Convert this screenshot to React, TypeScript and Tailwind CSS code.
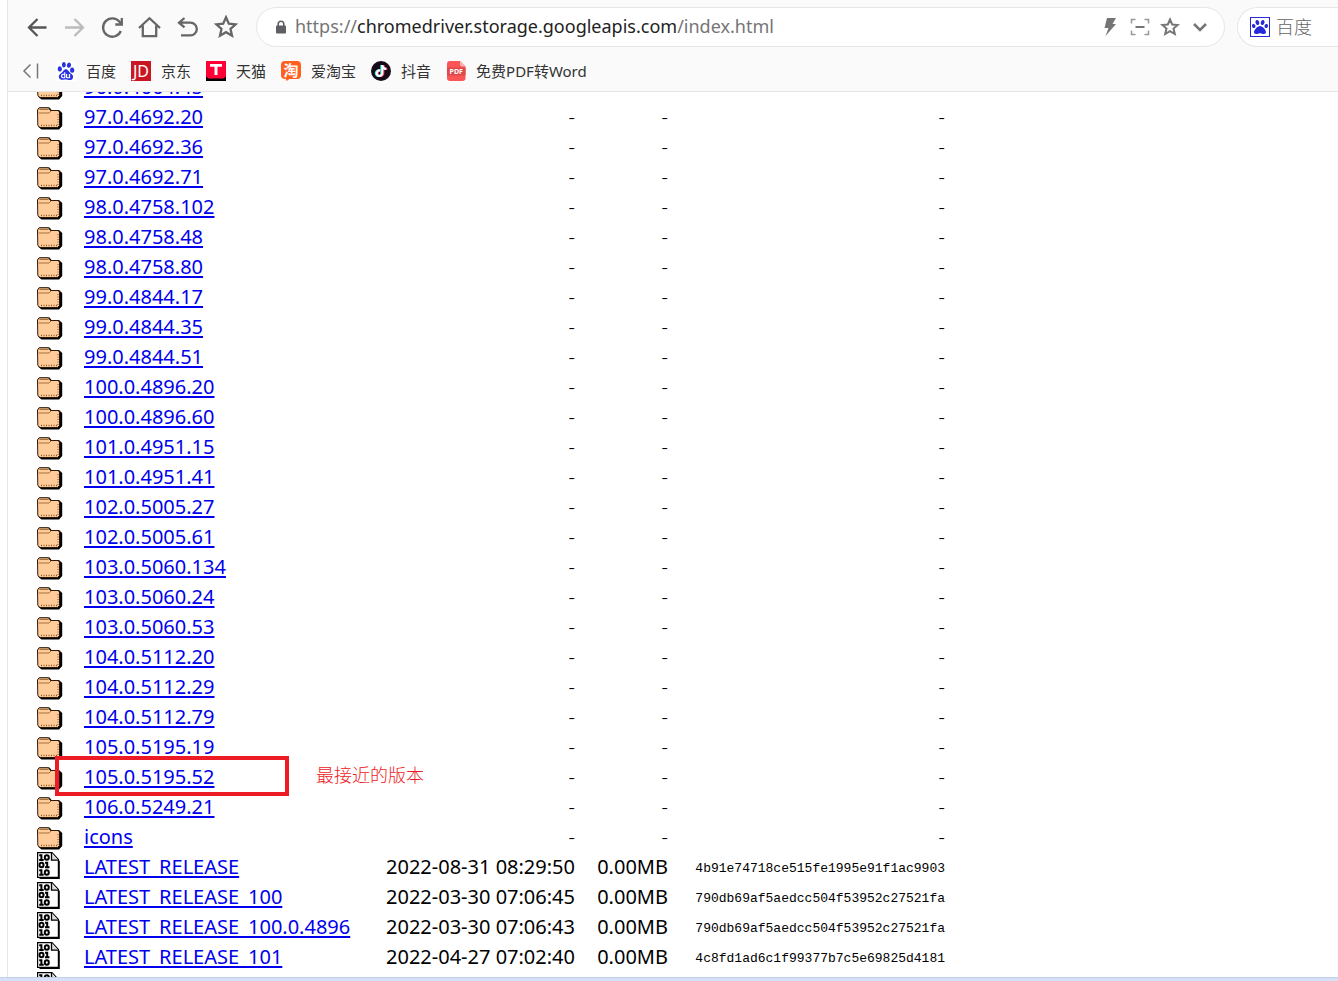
import type { ReactNode } from "react";
import { FaPaw } from "react-icons/fa";
import { FaTiktok } from "react-icons/fa6";
import { SiBaidu } from "react-icons/si";

type Entry = { name: string; date?: string; size?: string; etag?: string; note?: string };

const folders: Entry[] = [
  "96.0.4664.45", "97.0.4692.20", "97.0.4692.36", "97.0.4692.71", "98.0.4758.102", "98.0.4758.48",
  "98.0.4758.80", "99.0.4844.17", "99.0.4844.35", "99.0.4844.51", "100.0.4896.20", "100.0.4896.60",
  "101.0.4951.15", "101.0.4951.41", "102.0.5005.27", "102.0.5005.61", "103.0.5060.134", "103.0.5060.24",
  "103.0.5060.53", "104.0.5112.20", "104.0.5112.29", "104.0.5112.79", "105.0.5195.19", "105.0.5195.52",
  "106.0.5249.21", "icons",
].map((name) => (name === "105.0.5195.52" ? { name, note: "最接近的版本" } : { name }));

const files: Entry[] = [
  { name: "LATEST_RELEASE", date: "2022-08-31 08:29:50", size: "0.00MB", etag: "4b91e74718ce515fe1995e91f1ac9903" },
  { name: "LATEST_RELEASE_100", date: "2022-03-30 07:06:45", size: "0.00MB", etag: "790db69af5aedcc504f53952c27521fa" },
  { name: "LATEST_RELEASE_100.0.4896", date: "2022-03-30 07:06:43", size: "0.00MB", etag: "790db69af5aedcc504f53952c27521fa" },
  { name: "LATEST_RELEASE_101", date: "2022-04-27 07:02:40", size: "0.00MB", etag: "4c8fd1ad6c1f99377b7c5e69825d4181" },
  { name: "LATEST_RELEASE_101.0.4951", date: "2022-04-27 07:02:37", size: "0.00MB", etag: "4c8fd1ad6c1f99377b7c5e69825d4181" },
];

function FolderIcon() {
  return (
    <svg viewBox="0 0 26 23" className="mt-[5px] block h-[23px] w-[26px]" aria-hidden="true">
      <path d="M1 3 3 .5h9.500l2 2.500H22l3.200 3V19l-3.200 3.500H4.500L1.500 20z" fill="#000" />
      <path d="M.5 3 2 .8h9.500L13.500 3.500H21L22.500 5v13.500L20.500 20.500H3L.8 18.500z" fill="#ffcc99" stroke="#2a170a" strokeWidth="1" />
      <path d="M1.500 6h10.500L14 4M2.500 2.500h9" fill="none" stroke="#a8703c" strokeWidth="1" />
      <path d="M4 18.500h17" stroke="#8a5a2c" strokeWidth="1.400" strokeDasharray="1 1.500" />
      <path d="M21 7v12" stroke="#a8703c" strokeWidth="1.400" strokeDasharray="1 1.500" />
    </svg>
  );
}

function BinaryIcon() {
  return (
    <svg viewBox="0 0 23 27" className="block h-[27px] w-[23px]" aria-hidden="true">
      <path d="M2.500 2H15l7.800 7v18H2.500z" fill="#000" />
      <path d="M.6.6h14.400l6.400 7v17.800H.6z" fill="#fff" stroke="#000" strokeWidth="1.200" />
      <path d="M14.500.8v7.400h7" fill="#ddd" stroke="#000" strokeWidth="1.300" />
      <g fill="none" stroke="#000" strokeWidth="2">
        <path d="M2.200 3.300h2.200v5M2.200 8h4.500" />
        <ellipse cx="9.800" cy="5.500" rx="2" ry="2.200" />
        <ellipse cx="4.500" cy="13" rx="2" ry="2.200" />
        <path d="M8 10.800h2.200v5M8 15.200h4.500" />
        <path d="M2.200 18.300h2.200v5M2.200 22.700h4.500" />
        <ellipse cx="9.800" cy="20.500" rx="2" ry="2.200" />
      </g>
    </svg>
  );
}

const starPath = "M12 2.300l2.800 6.300 6.900.7-5.200 4.600 1.500 6.800-6-3.500-6 3.500 1.500-6.800L2.300 9.300l6.900-.7z";

function NavButton({ label, color, children }: { label: string; color: string; children: ReactNode }) {
  return (
    <button type="button" aria-label={label} className={`size-6 shrink-0 ${color}`}>
      <svg viewBox="0 0 24 24" className="size-6" fill="none" stroke="currentColor" strokeWidth="2.300">
        {children}
      </svg>
    </button>
  );
}

function BarButton({ label, children }: { label: string; children: ReactNode }) {
  return (
    <button type="button" aria-label={label} className="size-5 shrink-0 text-[#757575]">
      <svg viewBox="0 0 20 20" className="size-5" fill="none" stroke="currentColor" strokeWidth="2">
        {children}
      </svg>
    </button>
  );
}

function Bookmark({ label, icon }: { label: string; icon: ReactNode }) {
  return (
    <a href="#" className="flex items-center gap-2.5 whitespace-nowrap">
      {icon}
      <span>{label}</span>
    </a>
  );
}

function Dash() {
  return <span className="font-light">-</span>;
}

function Row({ entry, icon }: { entry: Entry; icon: ReactNode }) {
  return (
    <tr className="h-[30px]">
      <td className="pl-[29px] align-top">{icon}</td>
      <td className="relative">
        <a
          href="#"
          className="text-[#0000ee] underline decoration-2 underline-offset-2 [text-decoration-skip-ink:none]"
        >
          {entry.name}
        </a>
        {entry.note && (
          <>
            <div className="absolute -top-1.5 -left-[29px] h-10 w-[234px] border-4 border-[#ed1c24]" />
            <span className="absolute top-0 left-[232px] text-lg leading-[26px] font-light whitespace-nowrap text-[#ed1c24]">
              {entry.note}
            </span>
          </>
        )}
      </td>
      <td className="text-right">{entry.date ?? <Dash />}</td>
      <td className="text-right">{entry.size ?? <Dash />}</td>
      <td className="text-right">
        {entry.etag ? (
          <span className="inline-block align-middle font-['Liberation_Mono',monospace] text-[13px] leading-4">
            {entry.etag}
          </span>
        ) : (
          <Dash />
        )}
      </td>
    </tr>
  );
}

export default function App() {
  return (
    <div className="flex h-screen flex-col overflow-hidden bg-white font-['Noto_Sans','Noto_Sans_CJK_SC',sans-serif]">
      <div className="ml-[7px] flex min-h-0 flex-1 flex-col border-l border-[#e6e6e6]">
        <header className="relative shrink-0 border-b border-[#e6e6e6] bg-[#fafafa]">
          <div className="flex h-[54px] items-center pl-4">
            <nav className="flex gap-3.5 text-[#5a5a5a]" aria-label="导航">
              <NavButton label="后退" color="text-[#555555]">
                <path d="M5 12.500h17.500M13.500 4 5 12.500l8.500 8.500" />
              </NavButton>
              <NavButton label="前进" color="text-[#bcbcbc]">
                <path d="M3 12.500h17.500M12.500 4l8.500 8.500-8.500 8.500" />
              </NavButton>
              <NavButton label="刷新" color="text-[#666666]">
                <path d="M20.800 16A9.200 9.200 0 1 1 19.500 6.800l2 2.200M21.800 3v6.500h-6.500" />
              </NavButton>
              <NavButton label="主页" color="text-[#666666]">
                <path d="M1 13 11.500 3.200 22 13M4.800 10.500v10.700h13.400v-10.700" />
              </NavButton>
              <NavButton label="恢复" color="text-[#666666]">
                <path d="M8.500 3 3 7.700l5.500 4.600M3.500 7.700h11a6.300 6.300 0 0 1 0 12.600H5" />
              </NavButton>
              <NavButton label="收藏" color="text-[#666666]">
                <path d={starPath} />
              </NavButton>
            </nav>
            <div className="ml-[18px] flex h-10 min-w-0 flex-1 items-center rounded-full border border-[#e6e6e6] bg-white pr-3.5 pl-[18px]">
              <svg viewBox="0 0 12 14" className="h-3.5 w-3 shrink-0" aria-hidden="true">
                <path d="M3.200 6V4a2.800 2.800 0 0 1 5.600 0v2" fill="none" stroke="#5f6368" strokeWidth="1.600" />
                <rect x="1" y="5.500" width="10" height="8" rx="1" fill="#5f5f63" />
              </svg>
              <div className="ml-2 min-w-0 flex-1 truncate pb-0.5 text-lg leading-7 text-[#757575]">
                https://<span className="text-[#222222]">chromedriver.storage.googleapis.com</span>/index.html
              </div>
              <div className="flex gap-2.5">
                <BarButton label="极速模式">
                  <path d="M7 1h9L12.500 7H16L5.500 19 8.500 11H4.500z" fill="currentColor" stroke="none" />
                </BarButton>
                <BarButton label="截图">
                  <path d="M1.500 6.500v-4h4M14.500 2.500h4v4M18.500 13.500v4h-4M5.500 17.500h-4v-4" strokeWidth="1.500" opacity=".75" />
                  <path d="M5.500 10h9" />
                </BarButton>
                <BarButton label="添加收藏">
                  <path d="M10 2.500l2.200 5 5.500.5-4.200 3.600 1.300 5.400-4.800-2.900L5.200 17l1.300-5.400L2.300 8l5.500-.5z" />
                </BarButton>
                <BarButton label="展开">
                  <path d="m4 7 6 6 6-6" strokeWidth="2.500" />
                </BarButton>
              </div>
            </div>
            <button
              type="button"
              className="ml-3 flex h-10 w-[101px] shrink-0 items-center gap-1.5 rounded-l-full border border-r-0 border-[#e6e6e6] bg-white pl-3 text-lg font-light text-[#666666]"
            >
              <span className="flex size-5 items-center justify-center border border-[#2529d8]">
                <FaPaw className="size-4 text-[#2529d8]" />
              </span>
              百度
            </button>
          </div>
          <div className="flex h-[37px] items-center gap-[15px] pb-[3px] pl-3.5 text-[15px] text-[#333333]">
            <button type="button" aria-label="收起书签栏">
              <svg viewBox="0 0 19 20" className="h-5 w-[19px]" fill="none" stroke="#777" strokeWidth="1.500">
                <path d="M8.500 3.500 2 10l6.500 6.500M15.500 2.500v15" />
              </svg>
            </button>
            <Bookmark label="百度" icon={<SiBaidu className="size-5 bg-white p-px text-[#2932e1]" />} />
            <Bookmark
              label="京东"
              icon={<span className="flex size-5 items-center justify-center bg-[#c81623] text-base leading-5 text-white">JD</span>}
            />
            <Bookmark
              label="天猫"
              icon={
                <svg viewBox="0 0 20 20" className="size-5">
                  <path d="M0 0h20v20H0z" fill="#ff0036" />
                  <path d="M0 20v-4.500l2.500 2h15l2.500-2V20z" fill="#000" />
                  <path d="M4 3h12v2.800h-4.500V14h-3V5.800H4z" fill="#fff" />
                </svg>
              }
            />
            <Bookmark
              label="爱淘宝"
              icon={
                <svg viewBox="0 0 20 20" className="size-5">
                  <path d="M4 0h12a4 4 0 0 1 4 4v10a4 4 0 0 1-4 4H8.500L5.500 20l-.5-2H4a4 4 0 0 1-4-4V4a4 4 0 0 1 4-4z" fill="#ff5f1f" />
                  <text x="10" y="14.500" textAnchor="middle" fontSize="15" fontWeight="700" fill="#fff">淘</text>
                </svg>
              }
            />
            <Bookmark
              label="抖音"
              icon={
                <span className="flex size-5 items-center justify-center rounded-full bg-[#170b1a]">
                  <FaTiktok className="size-3 text-white [filter:drop-shadow(-1px_0_0_#25f4ee)_drop-shadow(1px_0_0_#fe2c55)]" />
                </span>
              }
            />
            <Bookmark
              label="免费PDF转Word"
              icon={
                <svg viewBox="0 0 20 20" className="size-5">
                  <path d="M3 0h11l5.500 5.500V17a3 3 0 0 1-3 3H4a3 3 0 0 1-3-3V3a3 3 0 0 1 2-3z" fill="#fb5555" />
                  <path d="M1 6.500h18.500v8H1z" fill="#dd4a4a" />
                  <path d="M14 0l5.500 5.500H16a2 2 0 0 1-2-2z" fill="#ffb3b0" />
                  <text x="10.200" y="13" textAnchor="middle" fontSize="7" fontWeight="700" fill="#fff">PDF</text>
                </svg>
              }
            />
          </div>
        </header>
        <main className="min-h-0 flex-1 overflow-hidden">
          <table className="-mt-5 w-[937px] table-fixed border-collapse text-xl leading-[30px] whitespace-nowrap text-black [&_td]:py-0 [&_td]:pr-0">
            <colgroup>
              <col className="w-[76px]" />
              <col className="w-[283px]" />
              <col className="w-[208px]" />
              <col className="w-[93px]" />
              <col className="w-[277px]" />
            </colgroup>
            <tbody>
              {folders.map((entry) => (
                <Row key={entry.name} entry={entry} icon={<FolderIcon />} />
              ))}
              {files.map((entry) => (
                <Row key={entry.name} entry={entry} icon={<BinaryIcon />} />
              ))}
            </tbody>
          </table>
        </main>
      </div>
      <footer className="h-1 shrink-0 border-t border-[#c5cee6] bg-[#d6e0f7]" />
    </div>
  );
}
